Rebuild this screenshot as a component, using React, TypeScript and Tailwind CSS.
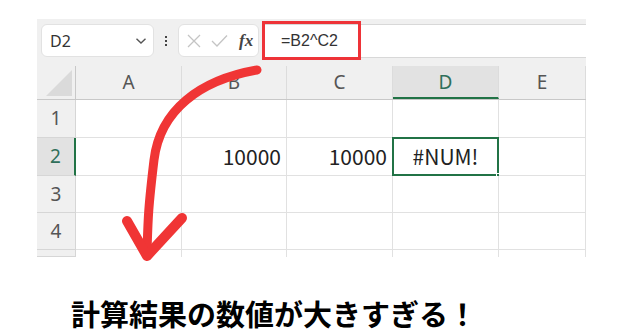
import React from 'react';

const COLS = [
  { key: 'A', w: 'w-[106px]' },
  { key: 'B', w: 'w-[105px]' },
  { key: 'C', w: 'w-[106px]' },
  { key: 'D', w: 'w-[106px]' },
  { key: 'E', w: 'flex-1' },
];

const ROWS = [
  { n: '1', h: 'h-[38px]' },
  { n: '2', h: 'h-[38px]' },
  { n: '3', h: 'h-[37px]' },
  { n: '4', h: 'h-[37px]' },
  { n: '', h: 'h-[7px]' },
];

const values: Record<string, string> = { B2: '10000', C2: '10000', D2: '#NUM!' };

const NameBox: React.FC = () => (
  <div className="flex h-[33px] w-[113px] items-center justify-between rounded-md border border-[#e2e2e2] bg-white pl-[8px] pr-[6px]">
    <span className="text-[16px] text-[#333]">D2</span>
    <svg width="12" height="8" viewBox="0 0 12 8" fill="none" stroke="#555" strokeWidth="1.4">
      <path d="M1.5 1.8 L6 6 L10.5 1.8" />
    </svg>
  </div>
);

const FxBox: React.FC = () => (
  <div className="flex h-[33px] w-[81px] items-center rounded-md border border-[#e2e2e2] bg-white pl-[7px]">
    <svg width="16" height="16" viewBox="0 0 16 16" stroke="#c4c4c4" strokeWidth="1.3" fill="none">
      <path d="M2 2 L14 14 M14 2 L2 14" />
    </svg>
    <svg className="ml-[9px]" width="17" height="14" viewBox="0 0 17 14" stroke="#c4c4c4" strokeWidth="1.3" fill="none">
      <path d="M1 7 L6 12 L16 1.5" />
    </svg>
    <span className="ml-[11px] font-['Liberation_Serif',serif] text-[17px] font-bold italic text-[#444]">fx</span>
  </div>
);

export default function App() {
  return (
    <div className="relative h-[335px] w-[619px] overflow-hidden bg-white font-['Noto_Sans',sans-serif]">
      <div className="ml-[37px] mt-[19px] w-[549px] bg-[#f0f0f0]">
        {/* toolbar */}
        <div className="flex h-[43px] items-center pl-[4px]">
          <NameBox />
          <div className="flex w-[24px] flex-col items-center gap-[2px]">
            <span className="h-[2px] w-[2px] bg-[#444]" />
            <span className="h-[2px] w-[2px] bg-[#444]" />
            <span className="h-[2px] w-[2px] bg-[#444]" />
          </div>
          <FxBox />
          <div className="ml-[3px] flex h-[34px] flex-1 items-center border-y border-[#d8d8d8] bg-white">
            <div className="flex h-[39px] w-[99px] items-center border-[3px] border-[#ee3338] pl-[16px]">
              <span className="font-['Liberation_Sans',sans-serif] text-[16px] text-[#333]">=B2^C2</span>
            </div>
          </div>
        </div>
        <div className="h-[4px]" />

        {/* column headers */}
        <div className="flex h-[34px] border-b border-[#c8c8c8] text-[19px] text-[#555]">
          <div className="relative w-[39px] border-r border-[#c8c8c8]">
            <svg className="absolute bottom-[3px] right-[3px]" width="26" height="26" viewBox="0 0 26 26">
              <path d="M26 0 L26 26 L0 26 Z" fill="#dadada" />
            </svg>
          </div>
          {COLS.map((c) => (
            <div
              key={c.key}
              className={`${c.w} flex items-center justify-center border-r border-[#dcdcdc] ${
                c.key === 'D' ? 'border-b-2 border-b-[#217346] bg-[#e2e2e2] pt-[2px] text-[#2f6f5a]' : ''
              }`}
            >
              {c.key}
            </div>
          ))}
        </div>

        {/* rows */}
        {ROWS.map((r, ri) => (
          <div key={ri} className={`flex ${r.h}`}>
            <div
              className={`flex w-[39px] items-center justify-center border-b border-r border-[#d6d6d6] text-[19px] ${
                r.n === '2' ? 'border-r-2 border-r-[#217346] bg-[#e2e2e2] text-[#2f6f5a]' : 'text-[#555]'
              }`}
            >
              {r.n}
            </div>
            {COLS.map((c) => {
              const id = c.key + r.n;
              const v = values[id];
              const sel = id === 'D2';
              return (
                <div
                  key={c.key}
                  className={`${c.w} relative flex items-center border-r border-[#e1e1e1] bg-white font-['Noto_Sans_CJK_JP',sans-serif] text-[21px] text-[#222] ${
                    ri < 4 ? 'border-b' : ''
                  } ${sel ? 'justify-center' : 'justify-end pr-[5px]'}`}
                >
                  {v}
                  {sel && (
                    <>
                      <div className="absolute inset-[-1px] border-2 border-[#217346]" />
                      <div className="absolute bottom-[-4px] right-[-4px] h-[6px] w-[6px] border border-white bg-[#217346]" />
                    </>
                  )}
                </div>
              );
            })}
          </div>
        ))}
      </div>

      {/* caption */}
      <div className="ml-[71px] mt-[42px] font-['Noto_Sans_CJK_JP',sans-serif] text-[29px] font-bold leading-none text-black">
        計算結果の数値が大きすぎる！
      </div>

      {/* red annotation arrow */}
      <svg className="pointer-events-none absolute left-0 top-0" width="619" height="335" viewBox="0 0 619 335" fill="none">
        <path
          d="M257 70 C200 80, 160 110, 154 160 S148 220, 147 252"
          stroke="#f03535"
          strokeWidth="9"
          strokeLinecap="round"
        />
        <path
          d="M127 221 L147 256 L182 218"
          stroke="#f03535"
          strokeWidth="10"
          strokeLinecap="round"
          strokeLinejoin="round"
        />
      </svg>
    </div>
  );
}
